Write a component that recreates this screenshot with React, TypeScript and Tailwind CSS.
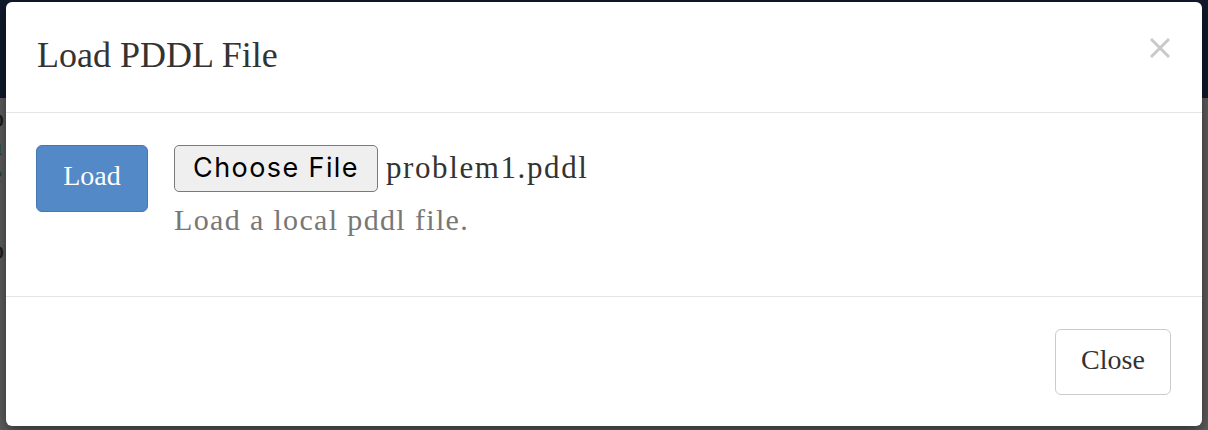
export default function App() {
  return (
    <div className="relative h-[430px] w-[1208px] overflow-hidden bg-[#5f5f5f] font-['Liberation_Serif',serif]">
      {/* page behind the overlay */}
      <div className="h-[98px] bg-[#111a2d]" />
      <div className="flex flex-col pl-0 pt-[6px] text-[28px] leading-[28px] -ml-[10px]">
        <span className="text-[#1a1a1a]">o</span>
        <span className="text-[#2e4a33]">a</span>
        <span className="text-[#2e4a33]">e</span>
        <span className="text-[#1a1a1a]">r</span>
        <span className="mt-[20px] text-[#1a1a1a]">o</span>
        <span className="text-[#1a1a1a]">-</span>
        <span className="text-[#1a1a1a]">r</span>
      </div>

      {/* modal */}
      <div className="absolute left-[6px] top-[2px] flex h-[424px] w-[1196px] flex-col rounded-[6px] bg-white shadow-[0_5px_15px_rgba(0,0,0,0.5)]">
        <div className="flex h-[111px] items-center justify-between border-b border-[#e5e5e5] pl-[31px] pr-[31px]">
          <h4 className="text-[36px] leading-none text-[#333] -mt-[4px]">Load PDDL File</h4>
          <svg width="22" height="22" viewBox="0 0 22 22" className="-mt-[18px]">
            <path d="M2 2 L20 20 M20 2 L2 20" stroke="#c9c9c9" strokeWidth="3" />
          </svg>
        </div>

        <div className="flex h-[183px] items-start gap-[26px] pl-[30px] pt-[32px]">
          <button className="h-[67px] w-[112px] rounded-[6px] border border-[#4677b0] bg-[#5289c6] pb-[6px] text-[28px] text-white">
            Load
          </button>
          <div className="flex flex-col">
            <div className="flex items-center gap-[8px]">
              <span className="flex h-[47px] w-[204px] items-center justify-center rounded-[5px] border border-[#7a7a7a] bg-[#efefef] font-['Inter',sans-serif] text-[27px] tracking-[1.4px] text-black">
                Choose File
              </span>
              <span className="text-[31px] tracking-[1.6px] text-[#333]">problem1.pddl</span>
            </div>
            <p className="mt-[10px] text-[30px] leading-[36px] tracking-[1.35px] text-[#777]">Load a local pddl file.</p>
          </div>
        </div>

        <div className="flex flex-1 items-start justify-end border-t border-[#e5e5e5] pr-[31px] pt-[32px]">
          <button className="h-[66px] w-[116px] rounded-[6px] border border-[#cccccc] bg-white pb-[5px] text-[28px] text-[#333]">
            Close
          </button>
        </div>
      </div>
    </div>
  );
}
